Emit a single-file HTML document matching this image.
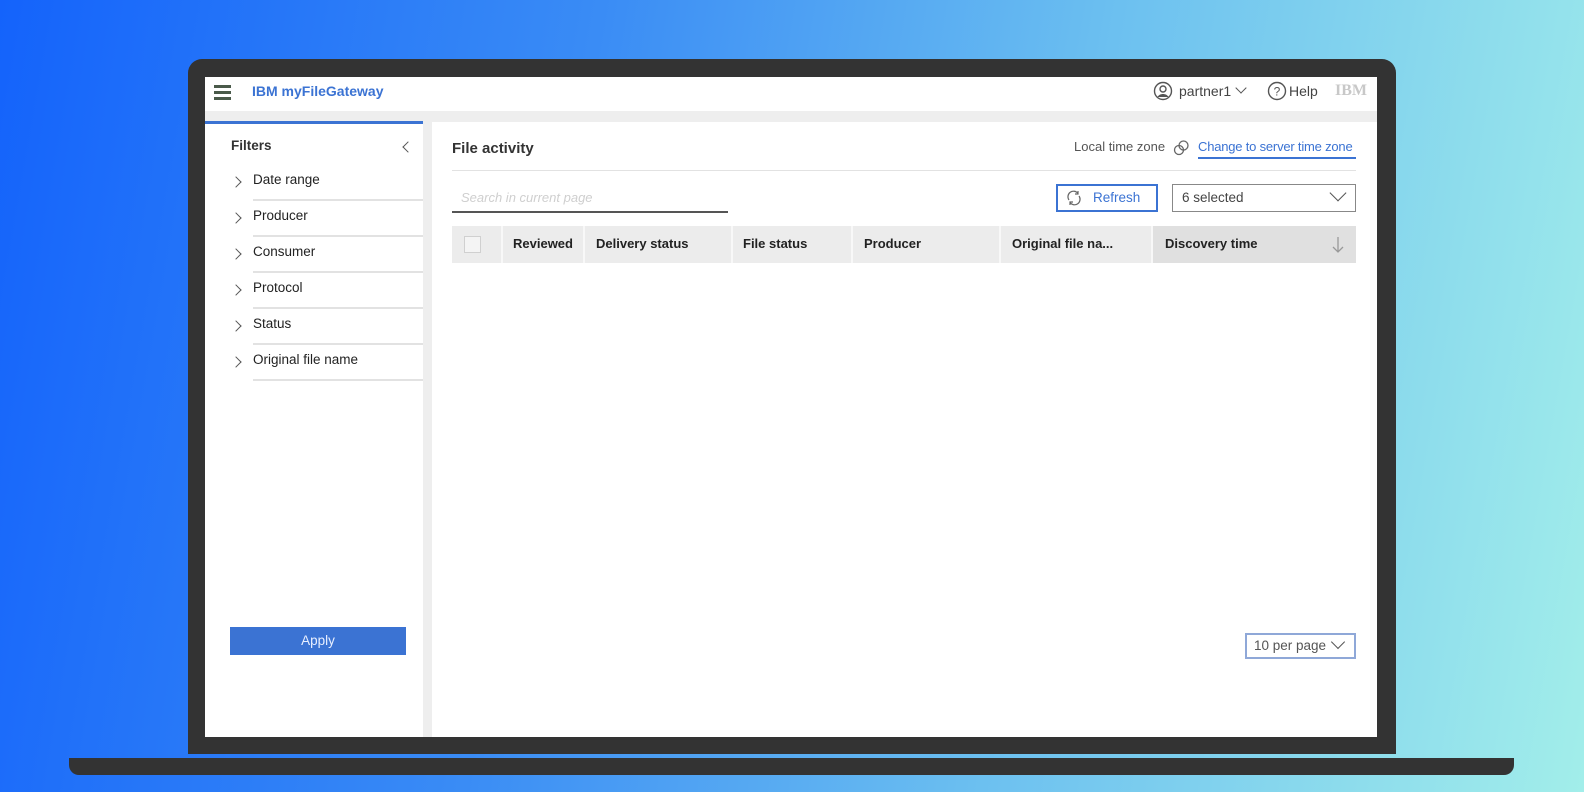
<!DOCTYPE html>
<html><head><meta charset="utf-8"><style>
*{margin:0;padding:0;box-sizing:border-box}
body{width:1584px;height:792px;overflow:hidden;position:relative;font-family:"Liberation Sans",sans-serif;background:linear-gradient(100deg,#1463fb 0%,#3a8cf5 35%,#6cc0f0 65%,#a2eeea 100%)}
.a{position:absolute}
.t{position:absolute;font-size:13.5px;color:#222;white-space:nowrap}
.b{font-weight:bold}
.sep{position:absolute;height:2px;background:#e2e2e2}
.chev{position:absolute;width:8px;height:8px;border-right:1.5px solid #555;border-bottom:1.5px solid #555;transform:rotate(-45deg)}
</style></head><body>
<div class="a" style="left:188px;top:59px;width:1208px;height:695px;background:#333;border-radius:14px 14px 0 0"></div>
<div class="a" style="left:69px;top:758px;width:1445px;height:17px;background:#333;border-radius:0 0 10px 10px"></div>
<div class="a" style="left:205px;top:77px;width:1172px;height:660px;background:#fff"></div>
<div class="a" style="left:205px;top:111px;width:1172px;height:11px;background:#eeeeee"></div>
<div class="a" style="left:423px;top:122px;width:9px;height:615px;background:#eeeeee"></div>
<div class="a" style="left:205px;top:121px;width:218px;height:3px;background:#3b73d3"></div>
<!-- header -->
<div class="a" style="left:214px;top:85px;width:17px;height:3px;background:#4a5a4a"></div>
<div class="a" style="left:214px;top:91px;width:17px;height:3px;background:#4a5a4a"></div>
<div class="a" style="left:214px;top:97px;width:17px;height:3px;background:#4a5a4a"></div>
<div class="t b" style="left:252px;top:83px;color:#3b73d3;font-size:14px">IBM myFileGateway</div>
<svg class="a" style="left:1153px;top:81px" width="20" height="20" viewBox="0 0 20 20"><circle cx="10" cy="10" r="8.5" fill="none" stroke="#555" stroke-width="1.4"/><circle cx="10" cy="8" r="3" fill="none" stroke="#555" stroke-width="1.4"/><path d="M4.5 16c2-4 9-4 11 0" fill="#555"/></svg>
<div class="t" style="left:1179px;top:83px;color:#444;font-size:14px">partner1</div>
<div class="chev" style="left:1237px;top:84px;transform:rotate(45deg)"></div>
<svg class="a" style="left:1267px;top:81px" width="20" height="20" viewBox="0 0 20 20"><circle cx="10" cy="10" r="8.5" fill="none" stroke="#555" stroke-width="1.4"/><text x="10" y="14.5" font-size="12" text-anchor="middle" fill="#555" font-family="Liberation Sans">?</text></svg>
<div class="t" style="left:1289px;top:83px;color:#444;font-size:14px">Help</div>
<div class="t b" style="left:1335px;top:82px;color:#c8c8c8;font-size:16px;font-family:'Liberation Serif',serif">IBM</div>
<!-- filters -->
<div class="t b" style="left:231px;top:138px;color:#333">Filters</div>
<div class="chev" style="left:404px;top:143px;transform:rotate(135deg)"></div>
<div class="chev" style="left:232px;top:178px"></div><div class="t" style="left:253px;top:172px">Date range</div><div class="sep" style="left:253px;top:199px;width:170px"></div>
<div class="chev" style="left:232px;top:214px"></div><div class="t" style="left:253px;top:208px">Producer</div><div class="sep" style="left:253px;top:235px;width:170px"></div>
<div class="chev" style="left:232px;top:250px"></div><div class="t" style="left:253px;top:244px">Consumer</div><div class="sep" style="left:253px;top:271px;width:170px"></div>
<div class="chev" style="left:232px;top:286px"></div><div class="t" style="left:253px;top:280px">Protocol</div><div class="sep" style="left:253px;top:307px;width:170px"></div>
<div class="chev" style="left:232px;top:322px"></div><div class="t" style="left:253px;top:316px">Status</div><div class="sep" style="left:253px;top:343px;width:170px"></div>
<div class="chev" style="left:232px;top:358px"></div><div class="t" style="left:253px;top:352px">Original file name</div><div class="sep" style="left:253px;top:379px;width:170px"></div>
<div class="a" style="left:230px;top:627px;width:176px;height:28px;background:#3b73d3"></div>
<div class="t" style="left:230px;top:633px;width:176px;text-align:center;color:#e8efff">Apply</div>
<!-- main -->
<div class="t b" style="left:452px;top:140px;font-size:15px;color:#333">File activity</div>
<div class="t" style="left:1074px;top:139px;color:#555;font-size:13px">Local time zone</div>
<svg class="a" style="left:1173px;top:139px" width="17" height="17" viewBox="0 0 17 17"><circle cx="6" cy="11" r="4.5" fill="none" stroke="#666" stroke-width="1.3"/><circle cx="10.5" cy="6.5" r="4.5" fill="none" stroke="#666" stroke-width="1.3"/></svg>
<div class="t" style="left:1198px;top:139px;color:#3b73d3;font-size:13px;letter-spacing:-0.2px">Change to server time zone</div>
<div class="a" style="left:1198px;top:157px;width:158px;height:1.5px;background:#3b73d3"></div>
<div class="a" style="left:452px;top:170px;width:904px;height:1px;background:#e2e2e2"></div>
<div class="t" style="left:461px;top:190px;color:#cfcfcf;font-style:italic;font-size:13px">Search in current page</div>
<div class="a" style="left:452px;top:211px;width:276px;height:2px;background:#555"></div>
<div class="a" style="left:1056px;top:184px;width:102px;height:28px;border:2px solid #3b73d3"></div>
<svg class="a" style="left:1066px;top:190px" width="16" height="16" viewBox="0 0 16 16" fill="none" stroke="#666" stroke-width="1.2"><path d="M3 10A5.5 5.5 0 0 1 12 3.5M13 6A5.5 5.5 0 0 1 4 12.5"/><path d="M12 1v3h-3M4 15v-3h3"/></svg>
<div class="t" style="left:1093px;top:190px;color:#3b73d3">Refresh</div>
<div class="a" style="left:1172px;top:184px;width:184px;height:28px;border:1.5px solid #888"></div>
<div class="t" style="left:1182px;top:190px;color:#444">6 selected</div>
<div class="a" style="left:1332px;top:187px;width:12px;height:12px;border-right:1.5px solid #555;border-bottom:1.5px solid #555;transform:rotate(45deg)"></div>
<!-- table header -->
<div class="a" style="left:452px;top:226px;width:904px;height:37px;background:#ececec"></div>
<div class="a" style="left:1153px;top:226px;width:203px;height:37px;background:#e0e0e0"></div>
<div class="a" style="left:501px;top:226px;width:2px;height:37px;background:#f8f8f8"></div>
<div class="a" style="left:583px;top:226px;width:2px;height:37px;background:#f8f8f8"></div>
<div class="a" style="left:731px;top:226px;width:2px;height:37px;background:#f8f8f8"></div>
<div class="a" style="left:851px;top:226px;width:2px;height:37px;background:#f8f8f8"></div>
<div class="a" style="left:999px;top:226px;width:2px;height:37px;background:#f8f8f8"></div>
<div class="a" style="left:1151px;top:226px;width:2px;height:37px;background:#f8f8f8"></div>
<div class="a" style="left:464px;top:236px;width:17px;height:17px;border:1px solid #d0d0d0;background:#f4f4f4"></div>
<div class="t b" style="left:513px;top:236px;font-size:13px">Reviewed</div>
<div class="t b" style="left:596px;top:236px;font-size:13px">Delivery status</div>
<div class="t b" style="left:743px;top:236px;font-size:13px">File status</div>
<div class="t b" style="left:864px;top:236px;font-size:13px">Producer</div>
<div class="t b" style="left:1012px;top:236px;font-size:13px">Original file na...</div>
<div class="t b" style="left:1165px;top:236px;font-size:13px">Discovery time</div>
<svg class="a" style="left:1332px;top:236px" width="12" height="18" viewBox="0 0 12 18" fill="none" stroke="#999" stroke-width="1.3"><path d="M6 1v15M1 11l5 5 5-5"/></svg>
<!-- per page -->
<div class="a" style="left:1245px;top:633px;width:111px;height:26px;border:2px solid #8fa8d8"></div>
<div class="t" style="left:1254px;top:638px;color:#555">10 per page</div>
<div class="a" style="left:1333px;top:637px;width:10px;height:10px;border-right:1.5px solid #555;border-bottom:1.5px solid #555;transform:rotate(45deg)"></div>
</body></html>
